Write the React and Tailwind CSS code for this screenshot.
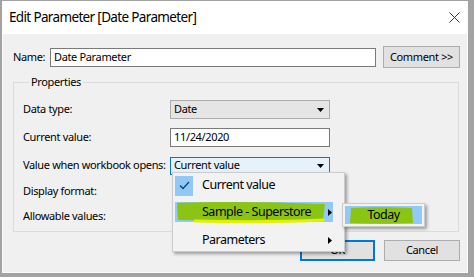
import React from "react";

const Caret = () => (
  <svg width="7" height="4" viewBox="0 0 7 4" className="block">
    <path d="M0 0 H7 L3.5 4 Z" fill="#000" />
  </svg>
);

const Right = () => (
  <svg width="4" height="7" viewBox="0 0 4 7" className="block">
    <path d="M0 0 L4 3.5 L0 7 Z" fill="#000" />
  </svg>
);

export default function App() {
  return (
    <div
      className="relative w-[474px] h-[277px] bg-[#a3a3a3] pt-[1px] pl-[2px] pr-[6px] pb-[4px] text-black"
      style={{ fontFamily: '"Noto Sans", "Open Sans", sans-serif' }}
    >
      <div className="w-full h-full flex flex-col bg-[#f0f0f0] border-l border-r border-b border-[#fbfbfb]">
        {/* Title bar */}
        <div className="h-[33px] shrink-0 bg-white flex items-center justify-between pl-[6px] pr-[7px]">
          <span className="text-[13.5px] tracking-[-0.65px] leading-none pt-[1px]">Edit Parameter [Date Parameter]</span>
          <svg width="11" height="11" viewBox="0 0 11 11" className="block">
            <path d="M0.5 0.5 L10.5 10.5 M10.5 0.5 L0.5 10.5" stroke="#333" strokeWidth="1" />
          </svg>
        </div>

        {/* Body */}
        <div className="flex-1 pl-[10px] pr-[6px] pt-[12px] text-[11px] tracking-[-0.35px] whitespace-nowrap">
          {/* Name row */}
          <div className="flex items-center h-[22px]">
            <span className="w-[37px]">Name:</span>
            <div className="w-[326px] h-[19px] bg-white border border-[#7a7a7a] flex items-center px-[3px]">
              Date Parameter
            </div>
            <button className="ml-[7px] w-[77px] h-[22px] bg-[#e1e1e1] border border-[#adadad] text-[11px] tracking-[-0.35px]">
              Comment &gt;&gt;
            </button>
          </div>

          {/* Properties group */}
          <fieldset className="mt-[6px] w-[446px] border border-[#dcdcdc] pl-[9px] pb-[5px] pt-[10px]">
            <legend className="ml-[6px] px-[2px] leading-[16px]">Properties</legend>
            <div className="flex flex-col">
              <div className="flex items-center h-[19px]">
                <span className="w-[147px]">Data type:</span>
                <div className="w-[160px] h-[19px] bg-[#e5e5e5] border border-[#adadad] flex items-center justify-between pl-[3px] pr-[5px]">
                  <span>Date</span>
                  <Caret />
                </div>
              </div>
              <div className="flex items-center h-[19px] mt-[9px]">
                <span className="w-[147px]">Current value:</span>
                <div className="w-[160px] h-[19px] bg-white border border-[#7a7a7a] flex items-center pl-[3px]">
                  11/24/2020
                </div>
              </div>
              <div className="flex items-center h-[19px] mt-[9px]">
                <span className="w-[147px]">Value when workbook opens:</span>
                <div className="w-[160px] h-[18px] bg-[#e5f1fb] border border-[#0078d7] flex items-center justify-between pl-[3px] pr-[5px]">
                  <span>Current value</span>
                  <Caret />
                </div>
              </div>
              <div className="flex items-center h-[19px] mt-[7px]">
                <span>Display format:</span>
              </div>
              <div className="flex items-center h-[19px] mt-[6px]">
                <span>Allowable values:</span>
              </div>
            </div>
          </fieldset>

          {/* Buttons */}
          <div className="flex justify-end gap-[9px] mt-[8px] pr-[1px]">
            <button className="w-[75px] h-[21px] bg-[#e1e1e1] border-2 border-[#0078d7] text-[11px] tracking-[-0.35px]">
              OK
            </button>
            <button className="w-[76px] h-[21px] bg-[#e1e1e1] border border-[#adadad] text-[11px] tracking-[-0.35px]">
              Cancel
            </button>
          </div>
        </div>
      </div>

      {/* Dropdown menu */}
      <div className="absolute left-[172px] top-[172px] w-[173px] h-[80px] bg-[#f2f2f2] border border-[#cccccc] shadow-[2px_2px_3px_rgba(0,0,0,0.35)] px-[2px] pt-[2px] text-[12.5px] tracking-[-0.5px] whitespace-nowrap">
        <div className="flex items-center h-[21px]">
          <div className="w-[18px] h-[20px] bg-[#90c8f6] flex items-center justify-center">
            <svg width="11" height="9" viewBox="0 0 11 9" className="block">
              <path d="M1 4.5 L4 7.5 L10 1" stroke="#1d3f66" strokeWidth="1.3" fill="none" />
            </svg>
          </div>
          <span className="ml-[9px]">Current value</span>
        </div>
        <div className="relative mt-[6px] h-[20px] flex items-center">
          <svg className="absolute left-0 top-[-2px]" width="160" height="26" viewBox="0 0 160 26">
            <rect x="0" y="2" width="158" height="20" fill="#91c9f7" />
            <path d="M2 3 C40 1, 100 2, 150 4 L148 20 C100 21, 50 21, 3 20 Z" fill="#8cc414" />
            <path d="M20 21 C60 22, 110 22, 148 20" stroke="#e4f000" strokeWidth="3" fill="none" strokeLinecap="round" />
          </svg>
          <span className="relative ml-[27px]">Sample - Superstore</span>
          <span className="relative ml-auto mr-[10px]"><Right /></span>
        </div>
        <div className="mt-[8px] h-[20px] flex items-center">
          <span className="ml-[27px]">Parameters</span>
          <span className="ml-auto mr-[10px]"><Right /></span>
        </div>
      </div>

      {/* Submenu */}
      <div className="absolute left-[342px] top-[203px] w-[83px] h-[24px] bg-[#f2f2f2] border border-[#cccccc] shadow-[2px_2px_3px_rgba(0,0,0,0.35)] p-[2px] text-[12.5px] tracking-[-0.5px]">
        <div className="relative w-full h-full bg-[#91c9f7] flex items-center justify-center">
          <svg className="absolute left-[5px] top-[1px]" width="64" height="17" viewBox="0 0 64 17">
            <path d="M1 1 C20 0, 45 0, 62 1 L63 16 C40 17, 20 17, 0 16 Z" fill="#8cc414" />
          </svg>
          <span className="relative">Today</span>
        </div>
      </div>
    </div>
  );
}
